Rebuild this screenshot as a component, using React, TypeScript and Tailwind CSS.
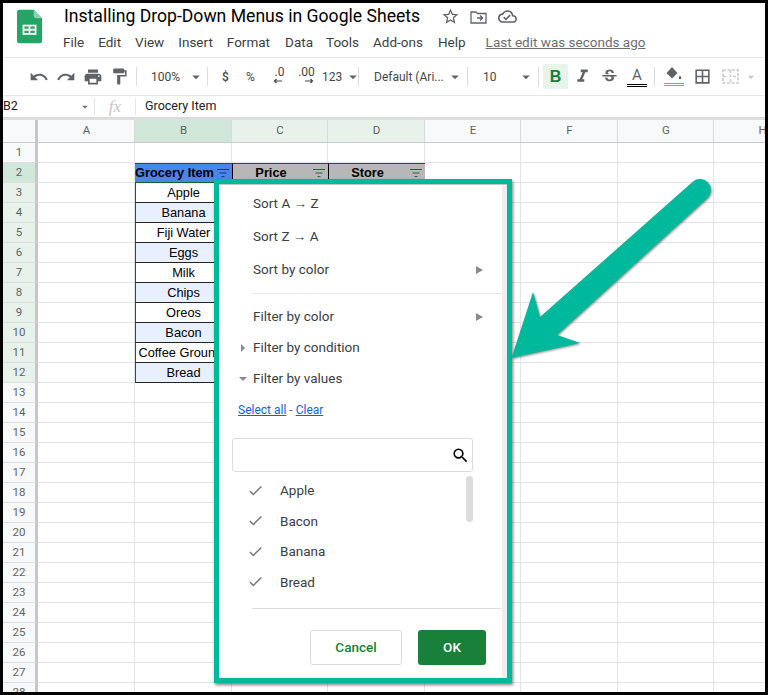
import React from "react";
import {
  MdUndo, MdRedo, MdPrint, MdFormatPaint, MdArrowDropDown, MdCheck, MdSearch,
  MdStarBorder, MdOutlineCloudDone, MdFormatItalic, MdStrikethroughS, MdBorderAll,
} from "react-icons/md";

const cols = [
  { n: "A", w: "w-[97px]" },
  { n: "B", w: "w-[97px]" },
  { n: "C", w: "w-[96px]" },
  { n: "D", w: "w-[97px]" },
  { n: "E", w: "w-[96px]" },
  { n: "F", w: "w-[97px]" },
  { n: "G", w: "w-[96px]" },
  { n: "H", w: "w-[97px]" },
];
const groceries = ["Apple", "Banana", "Fiji Water", "Eggs", "Milk", "Chips", "Oreos", "Bacon", "Coffee Grounds", "Bread"];
const menus = ["File", "Edit", "View", "Insert", "Format", "Data", "Tools", "Add-ons", "Help"];
const menuGaps = ["mr-[14px]", "mr-[14px]", "mr-[14px]", "mr-[14px]", "mr-[15px]", "mr-[13px]", "mr-[14px]", "mr-[15px]", "mr-[20px]"];
const values = ["Apple", "Bacon", "Banana", "Bread"];

function Filter({ color }: { color: string }) {
  return (
    <svg width="14" height="10" viewBox="0 0 14 10" className="shrink-0">
      <path d="M1 1.500h12M3.500 5h7M5.500 8.500h3" stroke={color} strokeWidth="1.100" />
    </svg>
  );
}

function Sep() {
  return <div className="w-px h-[19px] bg-[#dadce0] shrink-0" />;
}

function Caret({ className = "" }: { className?: string }) {
  return <MdArrowDropDown size={18} className={`text-[#5f6368] shrink-0 ${className}`} />;
}

function Icon({ w, children }: { w: string; children: React.ReactNode }) {
  return <div className={`${w} flex items-center justify-center shrink-0 text-[#5f6368]`}>{children}</div>;
}

function Sheet() {
  return (
    <svg width="26" height="35" viewBox="0 0 28 36" className="shrink-0">
      <path d="M2.500 0H18l9 9v24.500A2.500 2.500 0 0 1 24.500 36h-22A2.500 2.500 0 0 1 0 33.500V2.500A2.500 2.500 0 0 1 2.500 0z" fill="#23a566" />
      <path d="M18 0l9 9h-6.500A2.500 2.500 0 0 1 18 6.500z" fill="#8ed1b1" />
      <path d="M6 16h15v11H6z" fill="#f1f1f1" />
      <path d="M8 18h4.500v2.500H8zM14.500 18H19v2.500h-4.500zM8 22.500h4.500V25H8zM14.500 22.500H19V25h-4.500z" fill="#23a566" />
    </svg>
  );
}

function Header() {
  return (
    <div className="h-[54px] flex shrink-0 bg-white">
      <div className="w-[60px] pl-[14px] pt-[6px] shrink-0"><Sheet /></div>
      <div className="flex flex-col">
        <div className="h-[27px] flex items-center pl-[1px]">
          <span className="text-[17.600px] text-black leading-none whitespace-nowrap">Installing Drop-Down Menus in Google Sheets</span>
          <div className="flex items-center ml-[21px] gap-[10px] text-[#5f6368]">
            <MdStarBorder size={19} />
            <svg width="17" height="14" viewBox="0 0 17 14"><path d="M1 2h5l1.500 1.500H16V13H1zM7 8h5M10 5.500 12.500 8 10 10.500" fill="none" stroke="#5f6368" strokeWidth="1.300" /></svg>
            <MdOutlineCloudDone size={19} className="ml-[1px]" />
          </div>
        </div>
        <div className="flex items-center h-[24px] text-[13.500px] text-[#3c4043]">
          {menus.map((m, i) => (
            <span key={m} className={menuGaps[i]}>{m}</span>
          ))}
          <span className="underline text-[#6b6e72]">Last edit was seconds ago</span>
        </div>
      </div>
    </div>
  );
}

function Decimal({ label, dir }: { label: string; dir: "l" | "r" }) {
  return (
    <div className="w-[27px] flex flex-col items-center shrink-0 relative -top-[1px]">
      <span className="leading-[11px] text-[12px]">{label}</span>
      <svg width="9" height="6" viewBox="0 0 9 6" className={dir === "l" ? "-ml-[4px]" : "ml-[6px]"}>
        <path d={dir === "l" ? "M9 3H1.500M3.500 1 1.500 3l2 2" : "M0 3h7.500M5.500 1l2 2-2 2"} fill="none" stroke="#444746" strokeWidth="1.200" />
      </svg>
    </div>
  );
}

function Toolbar() {
  return (
    <div className="h-[39px] flex items-center border-y border-[#e4e6e8] bg-white shrink-0 text-[12px] text-[#444746] pl-[22px]">
      <Icon w="w-[27px]"><MdUndo size={20} /></Icon>
      <Icon w="w-[27px]"><MdRedo size={20} /></Icon>
      <Icon w="w-[27px]"><MdPrint size={20} /></Icon>
      <Icon w="w-[27px]"><MdFormatPaint size={19} /></Icon>
      <div className="ml-[3px]"><Sep /></div>
      <span className="ml-[14px] w-[34px]">100%</span>
      <Caret className="ml-[2px]" />
      <div className="ml-[2px]"><Sep /></div>
      <span className="ml-[14px] w-[20px] font-medium">$</span>
      <span className="ml-[4px] w-[20px]">%</span>
      <Decimal label=".0" dir="l" />
      <Decimal label=".00" dir="r" />
      <span className="ml-[2px] w-[24px]">123</span>
      <Caret className="-ml-[2px] -mr-[4px]" />
      <Sep />
      <span className="ml-[15px] w-[69px] whitespace-nowrap">Default (Ari...</span>
      <Caret className="ml-[3px]" />
      <div className="ml-[3px]"><Sep /></div>
      <span className="ml-[15px] w-[32px]">10</span>
      <Caret className="ml-[2px]" />
      <div className="ml-[3px]"><Sep /></div>
      <div className="ml-[4px] w-[25px] h-[25px] rounded-[2px] bg-[#e6f4ea] flex items-center justify-center text-[#188038] font-bold text-[16px] shrink-0" style={{ fontFamily: "'Liberation Sans', sans-serif" }}>B</div>
      <Icon w="w-[27px] ml-[1px]"><MdFormatItalic size={21} /></Icon>
      <Icon w="w-[27px]"><MdStrikethroughS size={19} /></Icon>
      <div className="w-[28px] flex flex-col items-center shrink-0 pt-[2px]">
        <span className="text-[15px] leading-[15px] text-[#5f6368]">A</span>
        <div className="w-[20px] h-[3px] mt-[1px] border-y border-black" />
      </div>
      <div className="ml-[3px]"><Sep /></div>
      <div className="w-[38px] flex flex-col items-center shrink-0">
        <svg width="18" height="14" viewBox="0 0 18 14"><path d="M7 0 1.500 6 7 11.500 12.500 6zM15 8.500c-.7 1-1.300 1.800-1.300 2.500a1.300 1.300 0 0 0 2.600 0c0-.7-.6-1.500-1.300-2.500z" fill="#5f6368" /></svg>
        <div className="w-[20px] h-[3px] mt-[2px] border-y border-[#4285f4] opacity-80" />
      </div>
      <Icon w="w-[19px]"><MdBorderAll size={21} /></Icon>
      <div className="ml-[10px] flex items-center shrink-0">
        <svg width="17" height="15" viewBox="0 0 17 15"><path d="M1 1h15v13H1zM1 7.500h5M11 7.500h5M8.500 1v13" fill="none" stroke="#c8cacc" strokeWidth="1.600" strokeDasharray="3 1.500" /></svg>
        <MdArrowDropDown size={16} className="text-[#c8cacc] ml-[4px]" />
      </div>
    </div>
  );
}

function Formula() {
  return (
    <div className="h-[22px] flex items-center bg-white border-b border-[#d6d8da] shrink-0 text-[12.500px] text-[#222]">
      <span className="w-[75px] leading-none">B2</span>
      <MdArrowDropDown size={14} className="text-[#777] shrink-0" />
      <div className="ml-[2px] h-[17px] w-px bg-[#e4e6e8]" />
      <span className="w-[40px] text-center text-[#c4c6c8] text-[17px] italic leading-none" style={{ fontFamily: "'Liberation Serif', serif" }}>fx</span>
      <div className="h-[17px] w-px bg-[#e4e6e8]" />
      <span className="ml-[9px]">Grocery Item</span>
    </div>
  );
}

function ColHead() {
  return (
    <div className="h-[25px] flex shrink-0 border-t-2 border-[#dcdee0] border-b border-b-[#c8cacc] bg-[#f8f9fa] text-[11.500px] text-[#5f6368]">
      <div className="w-[35px] border-r-[3px] border-[#c4c6c8] shrink-0" />
      {cols.map((c) => (
        <div
          key={c.n}
          className={`${c.w} shrink-0 flex items-center justify-center pl-[1px] border-r border-[#d8dadc] ${c.n === "B" ? "bg-[#d0e7d9]" : c.n === "C" || c.n === "D" ? "bg-[#e6f2ea]" : ""}`}
        >
          {c.n}
        </div>
      ))}
    </div>
  );
}

const cellFont = { fontFamily: "'Liberation Sans', sans-serif" };

function Row({ n }: { n: number }) {
  const item = n >= 3 && n <= 12 ? groceries[n - 3] : null;
  const rowBg = n === 2 ? "bg-[#d0e7d9]" : n <= 12 && n > 2 ? "bg-[#e6f2ea]" : "bg-[#f8f9fa]";
  const alt = n % 2 === 0;
  return (
    <div className="h-[20px] flex shrink-0">
      <div className={`w-[35px] shrink-0 flex items-center justify-center border-r-[3px] border-r-[#c4c6c8] border-b border-b-[#dcdee0] text-[11.500px] text-[#5f6368] ${rowBg}`}>{n}</div>
      {cols.map((c) => {
        if (n === 2 && c.n === "B") {
          return (
            <div key={c.n} className={`${c.w} shrink-0 flex items-center bg-[#4a86e8] border-y border-[#15602f] text-[12.800px] font-bold text-black`} style={cellFont}>
              <span className="flex-1 whitespace-nowrap overflow-hidden">Grocery Item</span>
              <span className="mr-[2px]"><Filter color="#123a7c" /></span>
            </div>
          );
        }
        if (n === 2 && (c.n === "C" || c.n === "D")) {
          return (
            <div key={c.n} className={`${c.w} shrink-0 flex items-center bg-[#b7b7b7] border-y border-l border-y-[#15602f] border-l-black text-[12.800px] font-bold text-black`} style={cellFont}>
              <span className="flex-1 text-center pr-[3px]">{c.n === "C" ? "Price" : "Store"}</span>
              <span className="mr-[2px]"><Filter color="#1e6b36" /></span>
            </div>
          );
        }
        if (item && c.n === "B") {
          return (
            <div key={c.n} className={`${c.w} shrink-0 flex items-center justify-center whitespace-nowrap overflow-hidden border-x border-x-[#15602f] border-b border-b-[#222] text-[12.800px] text-black ${alt ? "bg-[#e8f0fe]" : "bg-white"}`} style={cellFont}>
              <span>{item}</span>
            </div>
          );
        }
        return <div key={c.n} className={`${c.w} shrink-0 border-r border-b border-[#e2e3e4] bg-white`} />;
      })}
    </div>
  );
}

function Popup() {
  const rowCls = "flex items-center text-[13.500px] text-[#3c4043]";
  return (
    <div className="absolute left-[211px] top-[176px] w-[298px] h-[504px] border-[5px] border-[#00b89c] bg-white shadow-[1px_2px_3px_rgba(0,0,0,0.5)] flex flex-col">
      <div className="h-[1px] bg-[#8a8a8a] opacity-50 shrink-0" />
      <div className="flex flex-col flex-1 pr-[5px] border-r-[5px] border-[#eeeeee] pl-[34px]">
        <div className={`${rowCls} h-[33px] mt-[2px]`}>Sort A → Z</div>
        <div className={`${rowCls} h-[33px]`}>Sort Z → A</div>
        <div className={`${rowCls} h-[33px] justify-between pr-[14px]`}>
          <span>Sort by color</span><span className="w-0 h-0 border-y-[4px] border-y-transparent border-l-[7px] border-l-[#8a8a8a]" />
        </div>
        <div className="h-px bg-[#e8e8e8] mt-[7px] w-[249px] -ml-[1px] shrink-0" />
        <div className={`${rowCls} h-[31px] mt-[7px] justify-between pr-[14px]`}>
          <span>Filter by color</span><span className="w-0 h-0 border-y-[4px] border-y-transparent border-l-[7px] border-l-[#8a8a8a]" />
        </div>
        <div className={`${rowCls} h-[31px] -ml-[12px]`}>
          <span className="w-0 h-0 border-y-[4px] border-y-transparent border-l-[4px] border-l-[#8a8a8a] mr-[8px]" />
          <span>Filter by condition</span>
        </div>
        <div className={`${rowCls} h-[31px] -ml-[14px]`}>
          <span className="w-0 h-0 border-x-[4px] border-x-transparent border-t-[4px] border-t-[#8a8a8a] mr-[6px]" />
          <span>Filter by values</span>
        </div>
        <div className="h-[31px] -ml-[15px] flex items-center text-[12px] text-[#5f6368]">
          <span className="underline text-[#1a5fd0]">Select all</span>
          <span className="mx-[3px]">-</span>
          <span className="underline text-[#1a5fd0]">Clear</span>
        </div>
        <div className="-ml-[21px] mt-[13px] w-[241px] h-[34px] rounded-[3px] border border-[#dadce0] flex items-center justify-end pr-[2px] shrink-0">
          <MdSearch size={19} className="text-black" />
        </div>
        <div className="relative flex-col flex">
          {values.map((v) => (
            <div key={v} className={`${rowCls} h-[30.500px] -ml-[6px] first:mt-[3px]`}>
              <MdCheck size={17} className="text-[#70757a] shrink-0" />
              <span className="ml-[16px]">{v}</span>
            </div>
          ))}
          <div className="absolute left-[213px] top-[4px] w-[7px] h-[46px] rounded-full bg-[#dadce0]" />
        </div>
        <div className="h-px bg-[#dadce0] mt-[11px] w-[249px] -ml-[1px] shrink-0" />
        <div className="flex mt-[21px] ml-[57px]">
          <div className="w-[92px] h-[35px] rounded-[3px] border border-[#dadce0] flex items-center justify-center text-[13.500px] font-medium text-[#188038] bg-white">Cancel</div>
          <div className="ml-[16px] w-[68px] h-[35px] rounded-[3px] bg-[#188038] flex items-center justify-center text-[13.500px] font-medium text-white">OK</div>
        </div>
      </div>
    </div>
  );
}

function Arrow() {
  return (
    <svg width="260" height="200" viewBox="0 0 260 200" className="absolute left-[505px] top-[172px] overflow-visible">
      <g transform="translate(-508,-175)" style={{ filter: "drop-shadow(1px 1.500px 1px rgba(0,0,0,0.45))" }}>
        <path d="M511.500 358 533 292 540 317 693 181.500a11 11 0 0 1 15 16L557 335 580 343z" fill="#00b89c" />
      </g>
    </svg>
  );
}

export default function App() {
  const rows = Array.from({ length: 28 }, (_, i) => i + 1);
  return (
    <div className="w-[768px] h-[695px] border-[3px] border-black bg-white relative overflow-hidden flex flex-col" style={{ fontFamily: "Roboto, sans-serif" }}>
      <Header />
      <Toolbar />
      <Formula />
      <ColHead />
      <div className="flex flex-col overflow-hidden flex-1">
        {rows.map((n) => <Row key={n} n={n} />)}
      </div>
      <Popup />
      <Arrow />
    </div>
  );
}
